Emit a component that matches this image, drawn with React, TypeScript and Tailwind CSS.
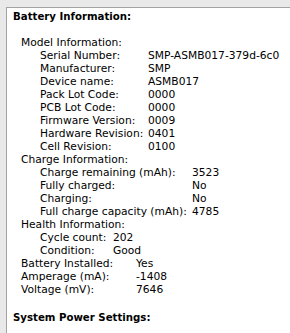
const model: [string, string][] = [
  ["Serial Number:", "SMP-ASMB017-379d-6c0"],
  ["Manufacturer:", "SMP"],
  ["Device name:", "ASMB017"],
  ["Pack Lot Code:", "0000"],
  ["PCB Lot Code:", "0000"],
  ["Firmware Version:", "0009"],
  ["Hardware Revision:", "0401"],
  ["Cell Revision:", "0100"],
];

const charge: [string, string][] = [
  ["Charge remaining (mAh):", "3523"],
  ["Fully charged:", "No"],
  ["Charging:", "No"],
  ["Full charge capacity (mAh):", "4785"],
];

const health: [string, string][] = [
  ["Cycle count:", "202"],
  ["Condition:", "Good"],
];

const battery: [string, string][] = [
  ["Battery Installed:", "Yes"],
  ["Amperage (mA):", "-1408"],
  ["Voltage (mV):", "7646"],
];

function Rows({ rows, label }: { rows: [string, string][]; label: string }) {
  return (
    <>
      {rows.map(([k, v]) => (
        <div key={k} className="flex h-[13px] items-center">
          <span className={`${label} shrink-0 whitespace-nowrap`}>{k}</span>
          <span className="whitespace-nowrap">{v}</span>
        </div>
      ))}
    </>
  );
}

export default function App() {
  return (
    <div className="w-[290px] h-[333px] overflow-hidden bg-[#e9e9e9] pt-[7px] pl-[6px]">
      <div
        className="h-full bg-white border-t border-l border-[#a3a3a3] pt-[2px] pl-[6px] text-[10.7px] leading-[13px] text-black"
        style={{ fontFamily: '"DejaVu Sans", "Lucida Grande", sans-serif' }}
      >
        <div className="h-[13px] text-[10.2px] font-bold flex items-center">Battery Information:</div>
        <div className="h-[13px]" />
        <div className="pl-[8px]">
          <div className="h-[13px] flex items-center">Model Information:</div>
          <div className="pl-[19px]">
            <Rows rows={model} label="w-[108px]" />
          </div>
          <div className="h-[13px] flex items-center">Charge Information:</div>
          <div className="pl-[19px]">
            <Rows rows={charge} label="w-[152px]" />
          </div>
          <div className="h-[13px] flex items-center">Health Information:</div>
          <div className="pl-[19px]">
            <Rows rows={health} label="w-[73px]" />
          </div>
          <Rows rows={battery} label="w-[115px]" />
        </div>
        <div className="h-[15px]" />
        <div className="h-[13px] text-[10.2px] font-bold flex items-center">System Power Settings:</div>
      </div>
    </div>
  );
}
